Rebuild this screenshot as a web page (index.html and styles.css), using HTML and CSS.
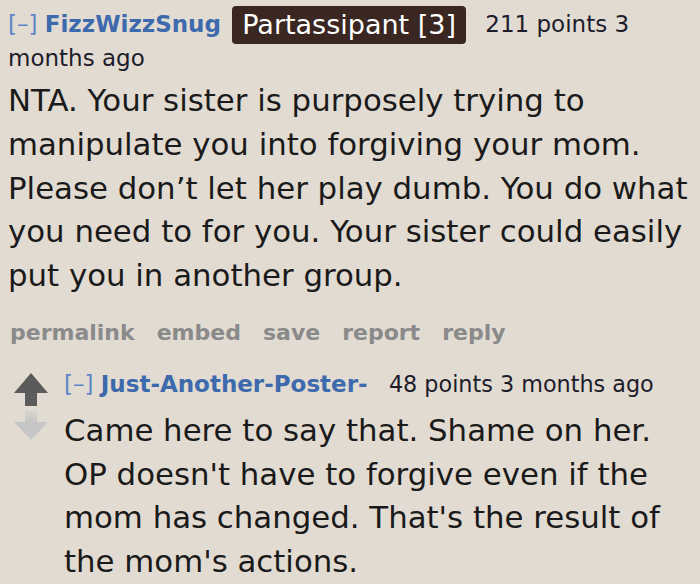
FILE: index.html
```html
<!DOCTYPE html>
<html>
<head>
<meta charset="utf-8">
<link rel="stylesheet" href="styles.css">
</head>
<body>
<div class="comment">
  <div class="tagline">
    <span class="toggle">[–]</span> <span class="author">FizzWizzSnug</span> <span class="flair">Partassipant [3]</span> <span class="meta">211 points 3</span> <span class="meta">months ago</span>
  </div>
  <div class="body">NTA. Your sister is purposely trying to manipulate you into forgiving your mom. Please don’t let her play dumb. You do what you need to for you. Your sister could easily put you in another group.</div>
  <div class="actions">
    <span>permalink</span><span>embed</span><span>save</span><span>report</span><span>reply</span>
  </div>
  <div class="child">
    <div class="arrows">
      <svg class="arrow" width="34" height="33" viewBox="0 0 34 33"><path d="M17 0 L34 20 L23 20 L23 33 L11 33 L11 20 L0 20 Z" fill="#5b5b5b"/></svg>
      <svg class="arrow" width="34" height="30" viewBox="0 0 34 30"><defs><linearGradient id="fade" x1="0" y1="0" x2="0" y2="1"><stop offset="0" stop-color="#c6c6c6" stop-opacity="0.3"/><stop offset="0.4" stop-color="#c6c6c6"/><stop offset="1" stop-color="#c6c6c6"/></linearGradient></defs><path d="M11 0 L23 0 L23 12 L34 12 L17 30 L0 12 L11 12 Z" fill="url(#fade)"/></svg>
    </div>
    <div class="child-main">
      <div class="tagline small">
        <span class="toggle">[–]</span> <span class="author">Just-Another-Poster-</span> <span class="meta gap">48 points 3 months ago</span>
      </div>
      <div class="body">Came here to say that. Shame on her. OP doesn't have to forgive even if the mom has changed. That's the result of the mom's actions.</div>
    </div>
  </div>
</div>
</body>
</html>
```

FILE: styles.css
```css
html, body {
  margin: 0;
  padding: 0;
  background: #e2dbd2;
}
body {
  font-family: "DejaVu Sans", Verdana, sans-serif;
  color: #1a1a1a;
  width: 700px;
  height: 584px;
  overflow: hidden;
}
.comment {
  padding: 6px 0 0 8px;
}
.tagline {
  font-size: 23px;
  line-height: 28px;
  color: #1c1c2a;
}
.toggle {
  color: #5b86c8;
}
.author {
  color: #3d69ad;
  font-weight: bold;
  margin-right: 4px;
}
.meta {
  white-space: nowrap;
}
.flair {
  display: inline-block;
  vertical-align: middle;
  background: #3a2721;
  color: #ffffff;
  font-size: 27px;
  line-height: 38px;
  padding: 0 10px;
  border-radius: 4px;
  margin-right: 12px;
}
.body {
  font-size: 30.8px;
  line-height: 43.75px;
  margin-top: 7px;
  color: #1a1a1a;
}
.actions {
  display: flex;
  gap: 22px;
  font-size: 22px;
  line-height: 26px;
  font-weight: bold;
  color: #8a8a8a;
  margin-top: 22px;
  padding-left: 2px;
}
.child {
  display: flex;
  margin-top: 23px;
  gap: 16px;
}
.arrows {
  display: flex;
  flex-direction: column;
  gap: 4px;
  padding-left: 6px;
  padding-top: 4px;
}
.arrow {
  display: block;
}
.child-main {
  flex: 1;
}
.tagline.small {
  font-size: 23px;
  line-height: 30px;
}
.small .gap {
  font-size: 22.3px;
  margin-left: 10px;
}
.child .body {
  margin-top: 10px;
}
```
